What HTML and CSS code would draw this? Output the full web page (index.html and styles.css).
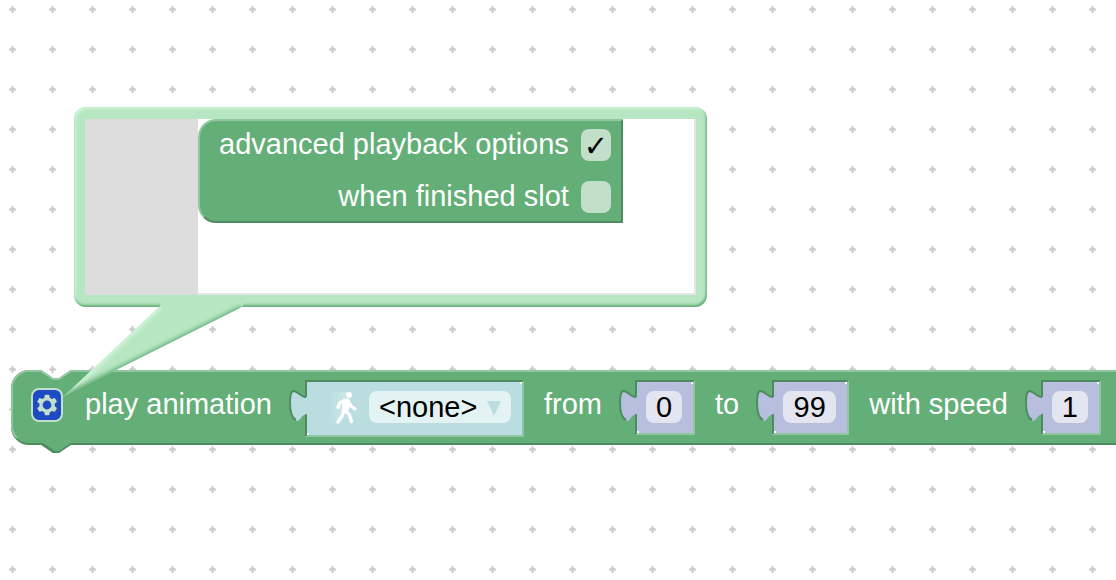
FILE: index.html
```
<!DOCTYPE html>
<html lang="en">
<head>
    <meta charset="UTF-8">
    <meta name="viewport" content="width=device-width, initial-scale=1.0">
    <title>Play animation block</title>
    <link rel="stylesheet" href="styles.css">
</head>
<body>
    <main class="workspace">
        <!-- Grid -->
        <svg class="grid" aria-hidden="true">
            <defs>
                <pattern id="gridCross" width="40" height="40" patternUnits="userSpaceOnUse">
                    <path d="M9 9.5h7M12.5 6v7" stroke="#ccc" stroke-width="2"/>
                    <circle cx="12.5" cy="9.5" r="2" fill="#ccc"/>
                </pattern>
            </defs>
            <rect width="100%" height="100%" fill="url(#gridCross)"/>
        </svg>

        <!-- Play animation block -->
        <div class="block">
            <svg class="block-shape" aria-hidden="true">
                <path fill="#4f8b60" d="M0 19a18 18 0 0 1 18-18H30l12 8h6l12-8H4000V75H60l-12 8h-6l-12-8H18a18 18 0 0 1-18-18z"/>
                <path fill="#64ae78" d="M0 18a18 18 0 0 1 18-18H30l12 8h6l12-8H4000V73H60l-12 8h-4l-12-8H18a18 18 0 0 1-18-18z"/>
                <path fill="none" stroke="#92c6a1" stroke-width="2" d="M6 68A17 17 0 0 1 1 56V18a17 17 0 0 1 17-17H30l12 8h6l12-8H4000"/>
            </svg>
            <button class="gear" type="button" aria-label="Block settings">
                <svg viewBox="0 0 16 16" aria-hidden="true">
                    <path fill="#c3dfcb" d="m4.203,7.296 0,1.368 -0.92,0.677 -0.11,0.41 0.9,1.559 0.41,0.11 1.043,-0.457 1.187,0.683 0.127,1.134 0.3,0.3 1.8,0 0.3,-0.299 0.127,-1.138 1.185,-0.682 1.046,0.458 0.409,-0.11 0.9,-1.559 -0.11,-0.41 -0.92,-0.677 0,-1.366 0.92,-0.677 0.11,-0.41 -0.9,-1.559 -0.409,-0.109 -1.046,0.458 -1.185,-0.682 -0.127,-1.138 -0.3,-0.299 -1.8,0 -0.3,0.3 -0.126,1.135 -1.187,0.682 -1.043,-0.457 -0.41,0.11 -0.899,1.559 0.108,0.409z"/>
                    <circle cx="8" cy="8" r="2.2" fill="#1c4bc4"/>
                </svg>
            </button>
            <label class="text" for="animation">play animation</label>
            <div class="value value-asset">
                <svg class="tab" viewBox="0 0 18 34" aria-hidden="true">
                    <path class="tab-fill" d="M18 7H16C12 7 9 1 4 1C1 2 1 8 1 13C1 22 3 29 8 31C11 31 13 24 18 24z"/>
                    <path class="tab-edge" d="M17 7H16C12 7 9 1 4 1C1 2 1 8 1 13C1 22 3 28 7 30"/>
                </svg>
                <svg class="walk" viewBox="0 0 34 34" aria-hidden="true">
                    <defs>
                        <linearGradient id="trail">
                            <stop offset="0" stop-color="#fff" stop-opacity="0"/>
                            <stop offset="1" stop-color="#fff" stop-opacity="0.3"/>
                        </linearGradient>
                    </defs>
                    <path fill="url(#trail)" d="M5 1h15l-3 7-6 4v5h4l-5 15H2z"/>
                    <circle cx="22" cy="4" r="3" fill="#fff"/>
                    <path fill="none" stroke="#fff" stroke-width="3.4" stroke-linecap="round" stroke-linejoin="round" d="M19 9.5l-6 2-2 5M21 10l3 5 4 3M17 20l-2 5-4 6M17 19l5 4 2.5 7.5"/>
                    <path fill="#fff" stroke="#fff" stroke-width="3" stroke-linejoin="round" d="M17 9l4 0 1 3-2 8-4 0z"/>
                </svg>
                <div class="dropdown">
                    <select class="field" id="animation">
                        <option>&lt;none&gt;</option>
                    </select>
                    <svg class="arrow" viewBox="0 0 14 15" aria-hidden="true"><path d="M0 0h14L7 15z" fill="#badedf"/></svg>
                </div>
            </div>
            <label class="text" for="from">from</label>
            <div class="value">
                <svg class="tab" viewBox="0 0 18 34" aria-hidden="true">
                    <path class="tab-fill" d="M18 7H16C12 7 9 1 4 1C1 2 1 8 1 13C1 22 3 29 8 31C11 31 13 24 18 24z"/>
                    <path class="tab-edge" d="M17 7H16C12 7 9 1 4 1C1 2 1 8 1 13C1 22 3 28 7 30"/>
                </svg>
                <input class="field number" id="from" type="text" inputmode="numeric" value="0">
            </div>
            <label class="text" for="to">to</label>
            <div class="value">
                <svg class="tab" viewBox="0 0 18 34" aria-hidden="true">
                    <path class="tab-fill" d="M18 7H16C12 7 9 1 4 1C1 2 1 8 1 13C1 22 3 29 8 31C11 31 13 24 18 24z"/>
                    <path class="tab-edge" d="M17 7H16C12 7 9 1 4 1C1 2 1 8 1 13C1 22 3 28 7 30"/>
                </svg>
                <input class="field number number-wide" id="to" type="text" inputmode="numeric" value="99">
            </div>
            <label class="text" for="speed">with speed</label>
            <div class="value">
                <svg class="tab" viewBox="0 0 18 34" aria-hidden="true">
                    <path class="tab-fill" d="M18 7H16C12 7 9 1 4 1C1 2 1 8 1 13C1 22 3 29 8 31C11 31 13 24 18 24z"/>
                    <path class="tab-edge" d="M17 7H16C12 7 9 1 4 1C1 2 1 8 1 13C1 22 3 28 7 30"/>
                </svg>
                <input class="field number" id="speed" type="text" inputmode="numeric" value="1">
            </div>
        </div>

        <!-- Settings bubble -->
        <section class="bubble" aria-label="Block options">
            <div class="mutator">
                <div class="flyout"></div>
                <div class="options">
                    <label class="option">advanced playback options <input class="check" type="checkbox" checked></label>
                    <label class="option">when finished slot <input class="check" type="checkbox"></label>
                </div>
            </div>
            <svg class="tail" viewBox="0 0 190 100" aria-hidden="true">
                <defs>
                    <clipPath id="tailClip"><path d="M100 0L97 8 1 98 179 9 183 3z"/></clipPath>
                    <filter id="soft" x="-10%" y="-10%" width="120%" height="120%"><feGaussianBlur stdDeviation="2"/></filter>
                </defs>
                <g clip-path="url(#tailClip)">
                    <rect width="190" height="100" fill="#b7e6c2"/>
                    <path d="M97 9L1 98" stroke="#d8f8e0" stroke-width="4" filter="url(#soft)"/>
                    <path d="M1 99L179 10" fill="none" stroke="#62a975" stroke-width="5" filter="url(#soft)"/>
                </g>
            </svg>
        </section>
    </main>
</body>
</html>
```
FILE: styles.css
```
* {
    box-sizing: border-box;
}
body {
    margin: 0;
    font-family: "Liberation Sans", Arial, sans-serif;
    font-size: 29px;
    line-height: 32px;
    color: #fff;
}
.workspace {
    position: relative;
    min-height: 100vh;
    overflow: hidden;
    background-color: #fff;
}
.grid {
    position: absolute;
    width: 100%;
    height: 100%;
}
.block {
    position: absolute;
    left: 11px;
    top: 370px;
    display: flex;
    align-items: flex-start;
    width: max-content;
    min-width: 100%;
    padding: 10px 24px 10px 20px;
}
.block-shape {
    position: absolute;
    left: 0;
    top: 0;
    width: 100%;
    height: 84px;
}
.gear {
    position: relative;
    width: 32px;
    height: 34px;
    margin: 8px 22px 0 0;
    padding: 0;
    border: 2px solid #c3dfcb;
    border-radius: 8px;
    background-color: #1c4bc4;
    cursor: pointer;
}
.gear svg {
    display: block;
    width: 32px;
    height: 32px;
    margin: -1px -2px;
}
.text {
    position: relative;
    margin-top: 8px;
}
.value {
    position: relative;
    display: flex;
    align-items: flex-start;
    height: 55px;
    margin: 0 20px 0 33px;
    padding: 9px 11px 0 9px;
    border: 2px solid;
    border-color: #4f8b60 #92c6a1 #92c6a1 #4f8b60;
    background-color: #b8bedd;
    color: #b8bedd;
}
.value-asset {
    height: 57px;
    padding-left: 20px;
    background-color: #badedf;
    color: #badedf;
}
.value::before,
.value::after {
    content: "";
    position: absolute;
    width: 2px;
    height: 2px;
    background-color: #fff;
}
.value::before {
    top: 0;
    right: 0;
}
.value::after {
    bottom: 0;
    left: 0;
}
.tab {
    position: absolute;
    left: -18px;
    top: 8px;
    width: 18px;
    height: 34px;
}
.tab-fill {
    fill: currentColor;
}
.tab-edge {
    fill: none;
    stroke: #4f8b60;
    stroke-width: 2;
}
.walk {
    width: 34px;
    height: 34px;
    margin-right: 8px;
}
.field {
    height: 32px;
    padding: 0 10px;
    border: 0;
    border-radius: 8px;
    outline: 0;
    background-color: rgba(255, 255, 255, 0.6);
    font: inherit;
    color: #000;
}
.number {
    width: 36px;
    padding: 0;
    text-align: center;
}
.number-wide {
    width: 53px;
}
.dropdown {
    position: relative;
    display: flex;
}
select.field {
    width: 142px;
    appearance: none;
}
.arrow {
    position: absolute;
    right: 10px;
    top: 10px;
    width: 14px;
    height: 15px;
    pointer-events: none;
}
.bubble {
    position: absolute;
    left: 74px;
    top: 107px;
    padding: 12px 11px;
    border-radius: 12px;
    background-color: #b7e6c2;
    box-shadow: inset -1px -2px 3px #62a975, inset 2px 2px 3px #cdf5d6;
}
.mutator {
    display: flex;
    align-items: flex-start;
    width: 611px;
    height: 176px;
    border: solid #e6e6e6;
    border-width: 0 2px 2px 0;
    background-color: #fff;
}
.flyout {
    align-self: stretch;
    width: 113px;
    margin-bottom: -2px;
    background-color: #ddd;
}
.options {
    display: flex;
    flex-direction: column;
    gap: 20px;
    padding: 8px 10px;
    border: 2px solid;
    border-color: #92c6a1 #4f8b60 #4f8b60 #92c6a1;
    border-radius: 18px 0 0 18px;
    background-color: #64ae78;
}
.option {
    display: flex;
    justify-content: flex-end;
    gap: 12px;
    padding-left: 9px;
    line-height: 30px;
}
.check {
    width: 30px;
    height: 32px;
    margin: 0;
    border-radius: 8px;
    appearance: none;
    background-color: #c1dfc9;
    font: 29px/34px "DejaVu Sans", sans-serif;
    color: #000;
    text-align: center;
}
.check:checked::before {
    content: "\2713";
}
.tail {
    position: absolute;
    left: -11px;
    top: 191px;
    width: 190px;
    height: 100px;
    pointer-events: none;
}
```
